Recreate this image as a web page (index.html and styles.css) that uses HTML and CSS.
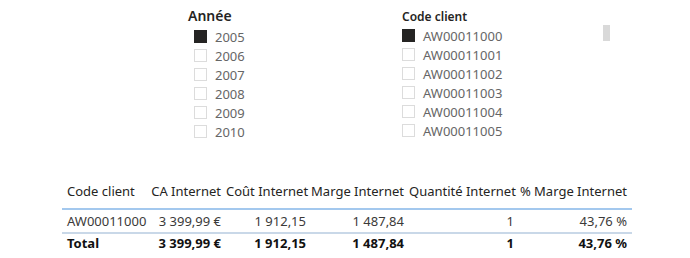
FILE: index.html
```html
<!DOCTYPE html>
<html lang="fr">
<head>
  <meta charset="UTF-8">
  <title>Rapport clients</title>
  <link rel="stylesheet" href="styles.css">
</head>
<body>

  <div class="slicers">
    <div class="slicer slicer-year">
      <div class="slicer-title">Année</div>
      <div class="item"><span class="box checked"></span>2005</div>
      <div class="item"><span class="box"></span>2006</div>
      <div class="item"><span class="box"></span>2007</div>
      <div class="item"><span class="box"></span>2008</div>
      <div class="item"><span class="box"></span>2009</div>
      <div class="item"><span class="box"></span>2010</div>
    </div>

    <div class="slicer slicer-client">
      <div class="slicer-title small">Code client</div>
      <div class="item"><span class="box checked"></span>AW00011000</div>
      <div class="item"><span class="box"></span>AW00011001</div>
      <div class="item"><span class="box"></span>AW00011002</div>
      <div class="item"><span class="box"></span>AW00011003</div>
      <div class="item"><span class="box"></span>AW00011004</div>
      <div class="item"><span class="box"></span>AW00011005</div>
      <div class="scrollbar"></div>
    </div>
  </div>

  <table class="grid">
    <colgroup>
      <col class="c1"><col class="c2"><col class="c3"><col class="c4"><col class="c5"><col class="c6">
    </colgroup>
    <thead>
      <tr>
        <th class="left">Code client</th>
        <th>CA Internet</th>
        <th>Coût Internet</th>
        <th>Marge Internet</th>
        <th>Quantité Internet</th>
        <th>% Marge Internet</th>
      </tr>
    </thead>
    <tbody>
      <tr class="row">
        <td class="left">AW00011000</td>
        <td>3 399,99 €</td>
        <td>1 912,15</td>
        <td>1 487,84</td>
        <td>1</td>
        <td>43,76 %</td>
      </tr>
      <tr class="total">
        <td class="left">Total</td>
        <td>3 399,99 €</td>
        <td>1 912,15</td>
        <td>1 487,84</td>
        <td>1</td>
        <td>43,76 %</td>
      </tr>
    </tbody>
  </table>

</body>
</html>
```

FILE: styles.css
```css
body {
  margin: 0;
  padding: 0;
  background-color: #fff;
  font-family: "Noto Sans", "Open Sans", sans-serif;
  color: #252423;
}

.slicers {
  display: flex;
  padding-top: 6px;
  height: 172px;
}

.slicer {
  position: relative;
}

.slicer-year {
  margin-left: 188px;
  width: 214px;
}

.slicer-client {
  width: 214px;
}

.slicer-title {
  font-size: 14px;
  font-weight: 600;
  line-height: 20px;
  color: #252423;
  margin-bottom: 1px;
}

.slicer-title.small {
  font-size: 12px;
  margin-top: 2px;
  margin-bottom: 0;
  line-height: 18px;
}

.slicer-year .item {
  padding-left: 6px;
}

.item {
  display: flex;
  align-items: center;
  height: 19px;
  font-size: 13px;
  color: #666;
}

.box {
  width: 11px;
  height: 11px;
  border: 1px solid #dcdcdc;
  margin-right: 8px;
  flex: none;
}

.box.checked {
  background-color: #252423;
  border-color: #252423;
}

.scrollbar {
  position: absolute;
  left: 201px;
  top: 19px;
  width: 7px;
  height: 16px;
  background-color: #d9d9d9;
}

.grid {
  margin-left: 62px;
  border-collapse: collapse;
  table-layout: fixed;
  width: 570px;
  font-size: 13px;
  white-space: nowrap;
}

.c1 { width: 84px; }
.c2 { width: 80px; }
.c3 { width: 85px; }
.c4 { width: 98px; }
.c5 { width: 110px; }
.c6 { width: 113px; }

.grid th,
.grid td {
  text-align: right;
  padding: 0 5px 0 0;
  overflow: visible;
}

.grid .left {
  text-align: left;
  padding-left: 5px;
}

.grid th {
  font-weight: normal;
  color: #252423;
  line-height: 18px;
  padding-top: 4px;
  padding-bottom: 8px;
  border-bottom: 2px solid #a3c8ee;
}

.grid .row td {
  line-height: 22px;
  color: #3b3a39;
  border-bottom: 2px solid #c9d8e8;
}

.grid .total td {
  line-height: 19px;
  font-weight: bold;
  color: #111;
}
```
